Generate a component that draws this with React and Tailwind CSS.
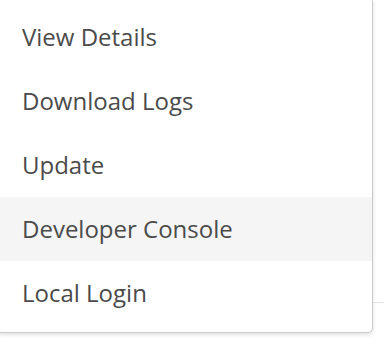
export default function App() {
  const items = ["View Details", "Download Logs", "Update", "Developer Console", "Local Login"];
  return (
    <div className="w-[384px] h-[348px] bg-white overflow-hidden flex items-start">
      <div className="-ml-[4px] -mt-[3px] w-[377px] shrink-0 bg-white border border-[#cacaca] rounded-[5px] shadow-[0_2px_4px_rgba(0,0,0,0.12)] py-[7px]">
        {items.map((t) => (
          <div
            key={t}
            className={`h-[64px] flex items-center pl-[25px] text-[24px] text-[#4b4b4b] ${t === "Developer Console" ? "bg-[#f5f5f5]" : ""}`}
            style={{ fontFamily: '"Open Sans", sans-serif' }}
          >
            {t}
          </div>
        ))}
      </div>
      <div className="flex-1 h-[303px] border-b border-[#e3e3e3]" />
    </div>
  );
}
